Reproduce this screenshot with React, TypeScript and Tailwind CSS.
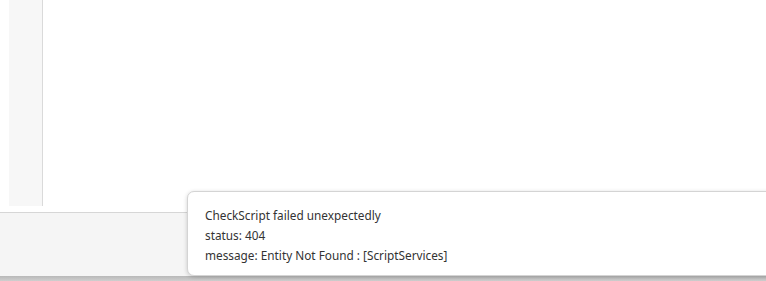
import React from 'react'

// toast with error lines
const ErrorToast = () => {
       return (
              <div className="absolute left-[187px] top-[191px] w-[600px] h-[85px] bg-white border border-[#d4d4d4] rounded-[7px] shadow-[0_1px_4px_rgba(0,0,0,0.18)] pl-[17px] pt-[13px] text-[11.8px] leading-[20px] text-[#333333]" style={{ fontFamily: '"Noto Sans", sans-serif' }}>
                     <p>CheckScript failed unexpectedly</p>
                     <p>status: 404</p>
                     <p>message: Entity Not Found : [ScriptServices]</p>
              </div>
       )
}

const App = () => {
       return (
              <div className="relative w-full h-[281px] bg-white overflow-hidden flex flex-col">
                     {/* Main area */}
                     <div className="h-[212px] flex">
                            <div className="ml-[9px] w-[34px] h-[206px] bg-[#f7f7f7] border-r border-[#dadada]"></div>
                     </div>
                     {/* Footer */}
                     <div className="h-[64px] bg-[#f5f5f5] border-t border-[#d6d6d6]"></div>
                     <div className="h-[5px] bg-gradient-to-b from-[#b8b8b8] to-[#cfcfcf]"></div>
                     <ErrorToast />
              </div>
       )
}

export default App
